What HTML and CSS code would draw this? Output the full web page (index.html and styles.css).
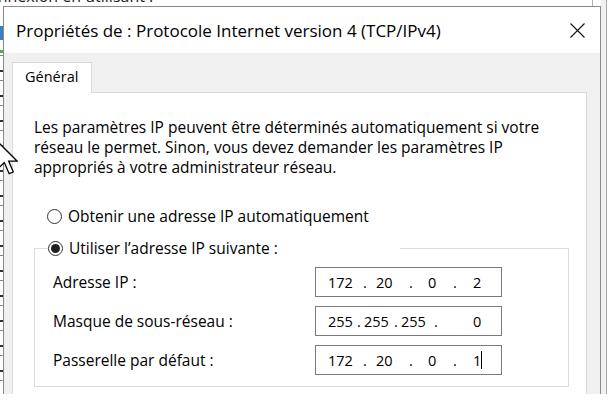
FILE: index.html
```html
<!DOCTYPE html>
<html lang="fr">
<head>
<meta charset="utf-8">
<title>Propriétés de : Protocole Internet version 4 (TCP/IPv4)</title>
<link rel="stylesheet" href="styles.css">
</head>
<body>
<div class="scene">
  <div class="bg-text">Connexion en utilisant :</div>
  <div class="bg-left"></div>
  <div class="bg-right"></div>
  <div class="bg-tick"></div>

  <div class="window">
    <div class="titlebar">
      <span class="title">Propriétés de : Protocole Internet version 4 (TCP/IPv4)</span>
      <span class="close">
        <svg width="15" height="15" viewBox="0 0 15 15"><path d="M0.5 0.5 L14.5 14.5 M14.5 0.5 L0.5 14.5" stroke="#111" stroke-width="1.1" fill="none"/></svg>
      </span>
    </div>
    <div class="content">
      <div class="tabs"><div class="tab">Général</div></div>
      <div class="panel">
        <p class="desc">Les paramètres IP peuvent être déterminés automatiquement si votre<br>réseau le permet. Sinon, vous devez demander les paramètres IP<br>appropriés à votre administrateur réseau.</p>
        <div class="radio"><span class="circle"></span>Obtenir une adresse IP automatiquement</div>
        <fieldset class="group">
          <legend class="radio legend"><span class="circle checked"></span>Utiliser l’adresse IP suivante :</legend>
          <div class="rows">
            <span class="lbl">Adresse IP :</span>
            <div class="ipbox ip-a"><span>172</span><span>.</span><span>20</span><span>.</span><span>0</span><span>.</span><span>2</span></div>
            <span class="lbl">Masque de sous-réseau :</span>
            <div class="ipbox ip-b"><span>255</span><span>.</span><span>255</span><span>.</span><span>255</span><span>.</span><span>0</span></div>
            <span class="lbl">Passerelle par défaut :</span>
            <div class="ipbox ip-a"><span>172</span><span>.</span><span>20</span><span>.</span><span>0</span><span>.</span><span class="caret">1</span></div>
          </div>
        </fieldset>
      </div>
    </div>
  </div>

  <svg class="cursor" width="21" height="34" viewBox="0 0 12.6 20.4">
    <path d="M0.6 0.6 L0.6 16.6 L4.4 12.9 L7.3 19.6 L9.8 18.6 L7 12 L12 12 Z" fill="#fff" stroke="#000" stroke-width="0.75" stroke-linejoin="miter"/>
  </svg>
</div>
</body>
</html>
```
FILE: styles.css
```css
* { box-sizing: border-box; }
html, body { margin: 0; padding: 0; }
body {
  width: 616px;
  height: 411px;
  background: #ffffff;
  overflow: hidden;
  font-family: "Open Sans", "Noto Sans", sans-serif;
  color: #000;
}
.scene {
  position: relative;
  width: 616px;
  height: 394px;
}
.bg-text {
  position: absolute;
  left: -22px;
  top: -15px;
  font-size: 16px;
  color: #222;
  white-space: nowrap;
}
.bg-left {
  position: absolute;
  left: 0;
  top: 6px;
  width: 3px;
  height: 388px;
  background:
    linear-gradient(#ffffff 0 20px, #3a7fc4 20px 34px, #ffffff 34px 44px, #4caf50 44px 47px, transparent 47px),
    repeating-linear-gradient(#ffffff 0 14px, #333 14px 16px, #ffffff 16px 24px, #888 24px 25px);
}
.bg-right {
  position: absolute;
  left: 601px;
  top: 0;
  width: 6px;
  height: 394px;
  background: #f0f0f0;
  border-right: 1px solid #a8a8a8;
}
.bg-tick {
  position: absolute;
  left: 592px;
  top: 0;
  width: 1px;
  height: 6px;
  background: #b0b0b0;
}
.window {
  position: absolute;
  left: 3px;
  top: 6px;
  width: 598px;
  height: 388px;
  border: 1px solid #8a8a8a;
  border-bottom: none;
  background: #f0f0f0;
  display: flex;
  flex-direction: column;
  overflow: hidden;
}
.titlebar {
  height: 46px;
  flex: none;
  background: #fff;
  display: flex;
  align-items: center;
  justify-content: space-between;
  padding-left: 12px;
}
.title {
  font-size: 17px;
  white-space: nowrap;
}
.close {
  width: 46px;
  height: 46px;
  display: flex;
  align-items: center;
  justify-content: center;
}
.content {
  padding: 9px 13px 0 8px;
  flex: 1;
  display: flex;
  flex-direction: column;
}
.tabs {
  display: flex;
  position: relative;
  z-index: 1;
  margin-bottom: -1px;
}
.tab {
  height: 31px;
  width: 80px;
  background: #fff;
  border: 1px solid #d9d9d9;
  border-bottom: none;
  padding: 4px 0 0 12px;
  font-size: 14.5px;
}
.panel {
  flex: 1;
  background: #fff;
  border: 1px solid #d9d9d9;
  border-bottom: none;
  padding: 24px 0 0 21px;
  font-size: 15.5px;
}
.desc {
  margin: 0;
  line-height: 20px;
  white-space: nowrap;
}
.radio {
  display: flex;
  align-items: center;
  height: 20px;
  line-height: 20px;
  white-space: nowrap;
}
.panel > .radio {
  margin: 29px 0 0 13px;
}
.circle {
  width: 15px;
  height: 15px;
  border: 1px solid #333;
  border-radius: 50%;
  margin-right: 6px;
  flex: none;
  background: #fff;
  display: flex;
  align-items: center;
  justify-content: center;
}
.circle.checked::after {
  content: "";
  width: 9px;
  height: 9px;
  border-radius: 50%;
  background: #222;
}
.group {
  margin: 12px 0 0 0;
  width: 535px;
  border: 1px solid #dcdcdc;
  padding: 0 0 11px 18px;
  min-width: 0;
}
.legend {
  padding: 0;
  margin-left: -5px;
  width: 352px;
}
.rows {
  display: grid;
  grid-template-columns: 262px 187px;
  grid-auto-rows: 30px;
  row-gap: 9px;
  margin-top: 9px;
  align-items: center;
}
.lbl {
  white-space: nowrap;
}
.ipbox {
  height: 30px;
  border: 1px solid #7a7a7a;
  background: #fff;
  display: grid;
  align-items: center;
  padding-left: 12px;
  font-size: 14.5px;
  white-space: nowrap;
}
.ip-a { grid-template-columns: 35px 13px 33px 19px 25px 20px auto; }
.ip-b { grid-template-columns: 29px 7px 30px 7px 33px 39px auto; }
.caret {
  display: flex;
  align-items: center;
}
.caret::after {
  content: "";
  width: 1px;
  height: 18px;
  background: #000;
}
.cursor {
  position: absolute;
  left: -3px;
  top: 141px;
}
```
